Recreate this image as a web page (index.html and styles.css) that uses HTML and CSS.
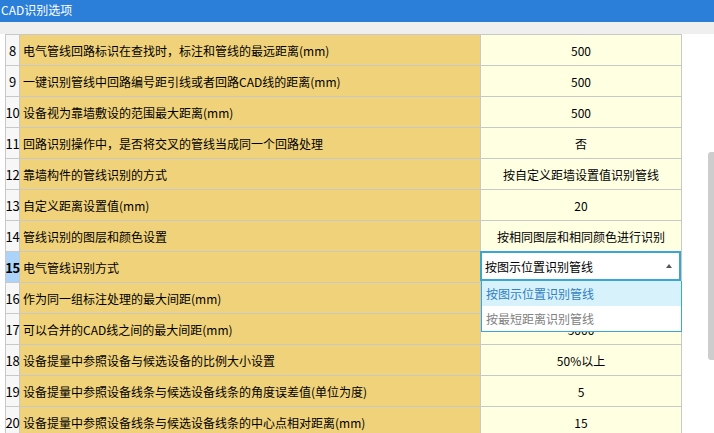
FILE: index.html
```html
<!DOCTYPE html>
<html lang="zh-CN">
<head>
<meta charset="utf-8">
<title>CAD识别选项</title>
<link rel="stylesheet" href="styles.css">
</head>
<body>
<div class="window">
  <div class="titlebar">CAD识别选项</div>
  <div class="strip"></div>
  <div class="main">
    <div class="grid">
      <div class="num">8</div><div class="label">电气管线回路标识在查找时，标注和管线的最远距离(mm)</div><div class="val">500</div>
      <div class="num">9</div><div class="label">一键识别管线中回路编号距引线或者回路CAD线的距离(mm)</div><div class="val">500</div>
      <div class="num">10</div><div class="label">设备视为靠墙敷设的范围最大距离(mm)</div><div class="val">500</div>
      <div class="num">11</div><div class="label">回路识别操作中，是否将交叉的管线当成同一个回路处理</div><div class="val">否</div>
      <div class="num">12</div><div class="label">靠墙构件的管线识别的方式</div><div class="val">按自定义距墙设置值识别管线</div>
      <div class="num">13</div><div class="label">自定义距离设置值(mm)</div><div class="val">20</div>
      <div class="num">14</div><div class="label">管线识别的图层和颜色设置</div><div class="val">按相同图层和相同颜色进行识别</div>
      <div class="num active">15</div><div class="label">电气管线识别方式</div>
      <div class="val editing">
        <div class="select">
          <span class="select-text">按图示位置识别管线</span>
          <span class="caret"></span>
        </div>
        <div class="options">
          <div class="option selected">按图示位置识别管线</div>
          <div class="option">按最短距离识别管线</div>
        </div>
      </div>
      <div class="num">16</div><div class="label">作为同一组标注处理的最大间距(mm)</div><div class="val">3000</div>
      <div class="num">17</div><div class="label">可以合并的CAD线之间的最大间距(mm)</div><div class="val">5000</div>
      <div class="num">18</div><div class="label">设备提量中参照设备与候选设备的比例大小设置</div><div class="val">50%以上</div>
      <div class="num">19</div><div class="label">设备提量中参照设备线条与候选设备线条的角度误差值(单位为度)</div><div class="val">5</div>
      <div class="num">20</div><div class="label">设备提量中参照设备线条与候选设备线条的中心点相对距离(mm)</div><div class="val">15</div>
    </div>
    <div class="scrolltrack"><div class="thumb"></div></div>
  </div>
</div>
</body>
</html>
```
FILE: styles.css
```css
html, body {
  margin: 0;
  padding: 0;
  background: #ffffff;
}
body {
  font-family: "Noto Sans CJK SC", "Noto Sans", sans-serif;
  font-size: 12px;
  color: #000;
}
.window {
  width: 714px;
  height: 433px;
  overflow: hidden;
  display: flex;
  flex-direction: column;
}
.titlebar {
  height: 22px;
  line-height: 20px;
  background: #2b7fd9;
  color: #ffffff;
  padding-left: 1px;
  font-size: 12px;
  flex: none;
}
.strip {
  height: 12px;
  background: #efefef;
  flex: none;
}
.main {
  flex: 1;
  display: flex;
  min-height: 0;
}
.grid {
  margin-left: 5px;
  display: grid;
  grid-template-columns: 14px 461px 201px;
  grid-auto-rows: 31px;
  border-left: 1px solid #c8c8c8;
  border-top: 1px solid #c8c8c8;
  align-self: flex-start;
  flex: none;
}
.grid > div {
  border-right: 1px solid #c8c8c8;
  border-bottom: 1px solid #c8c8c8;
  display: flex;
  align-items: center;
  white-space: nowrap;
}
.num {
  background: #f7f7f7;
  justify-content: center;
  overflow: visible;
  font-size: 13px;
  letter-spacing: -0.3px;
}
.num.active {
  background: #acd3fa;
  font-weight: bold;
}
.label {
  background: #f0d27a;
  padding-left: 3px;
  position: relative;
}
.val {
  background: #ffffe1;
  justify-content: center;
}
.val.editing {
  position: relative;
}
.select {
  position: absolute;
  left: -1px;
  top: -1px;
  width: 201px;
  height: 30px;
  box-sizing: border-box;
  border: 2px solid #3aa6d8;
  background: #ffffff;
  display: flex;
  align-items: center;
  justify-content: space-between;
  padding: 0 7px 0 3px;
  z-index: 2;
}
.caret {
  width: 0;
  height: 0;
  border-left: 3px solid transparent;
  border-right: 3px solid transparent;
  border-bottom: 4px solid #555555;
}
.options {
  position: absolute;
  left: 0;
  top: 29px;
  width: 201px;
  box-sizing: border-box;
  border: 1px solid #3aa6d8;
  border-top: none;
  background: #ffffff;
  z-index: 3;
}
.option {
  height: 25px;
  line-height: 25px;
  padding-left: 4px;
  color: #808080;
}
.option.selected {
  background: #d8f2fb;
  color: #2f7fc2;
}
.scrolltrack {
  margin-left: auto;
  width: 6px;
  flex: none;
}
.thumb {
  margin-top: 118px;
  height: 208px;
  background: #cdcdcd;
  border-radius: 3px 0 0 3px;
}
```
